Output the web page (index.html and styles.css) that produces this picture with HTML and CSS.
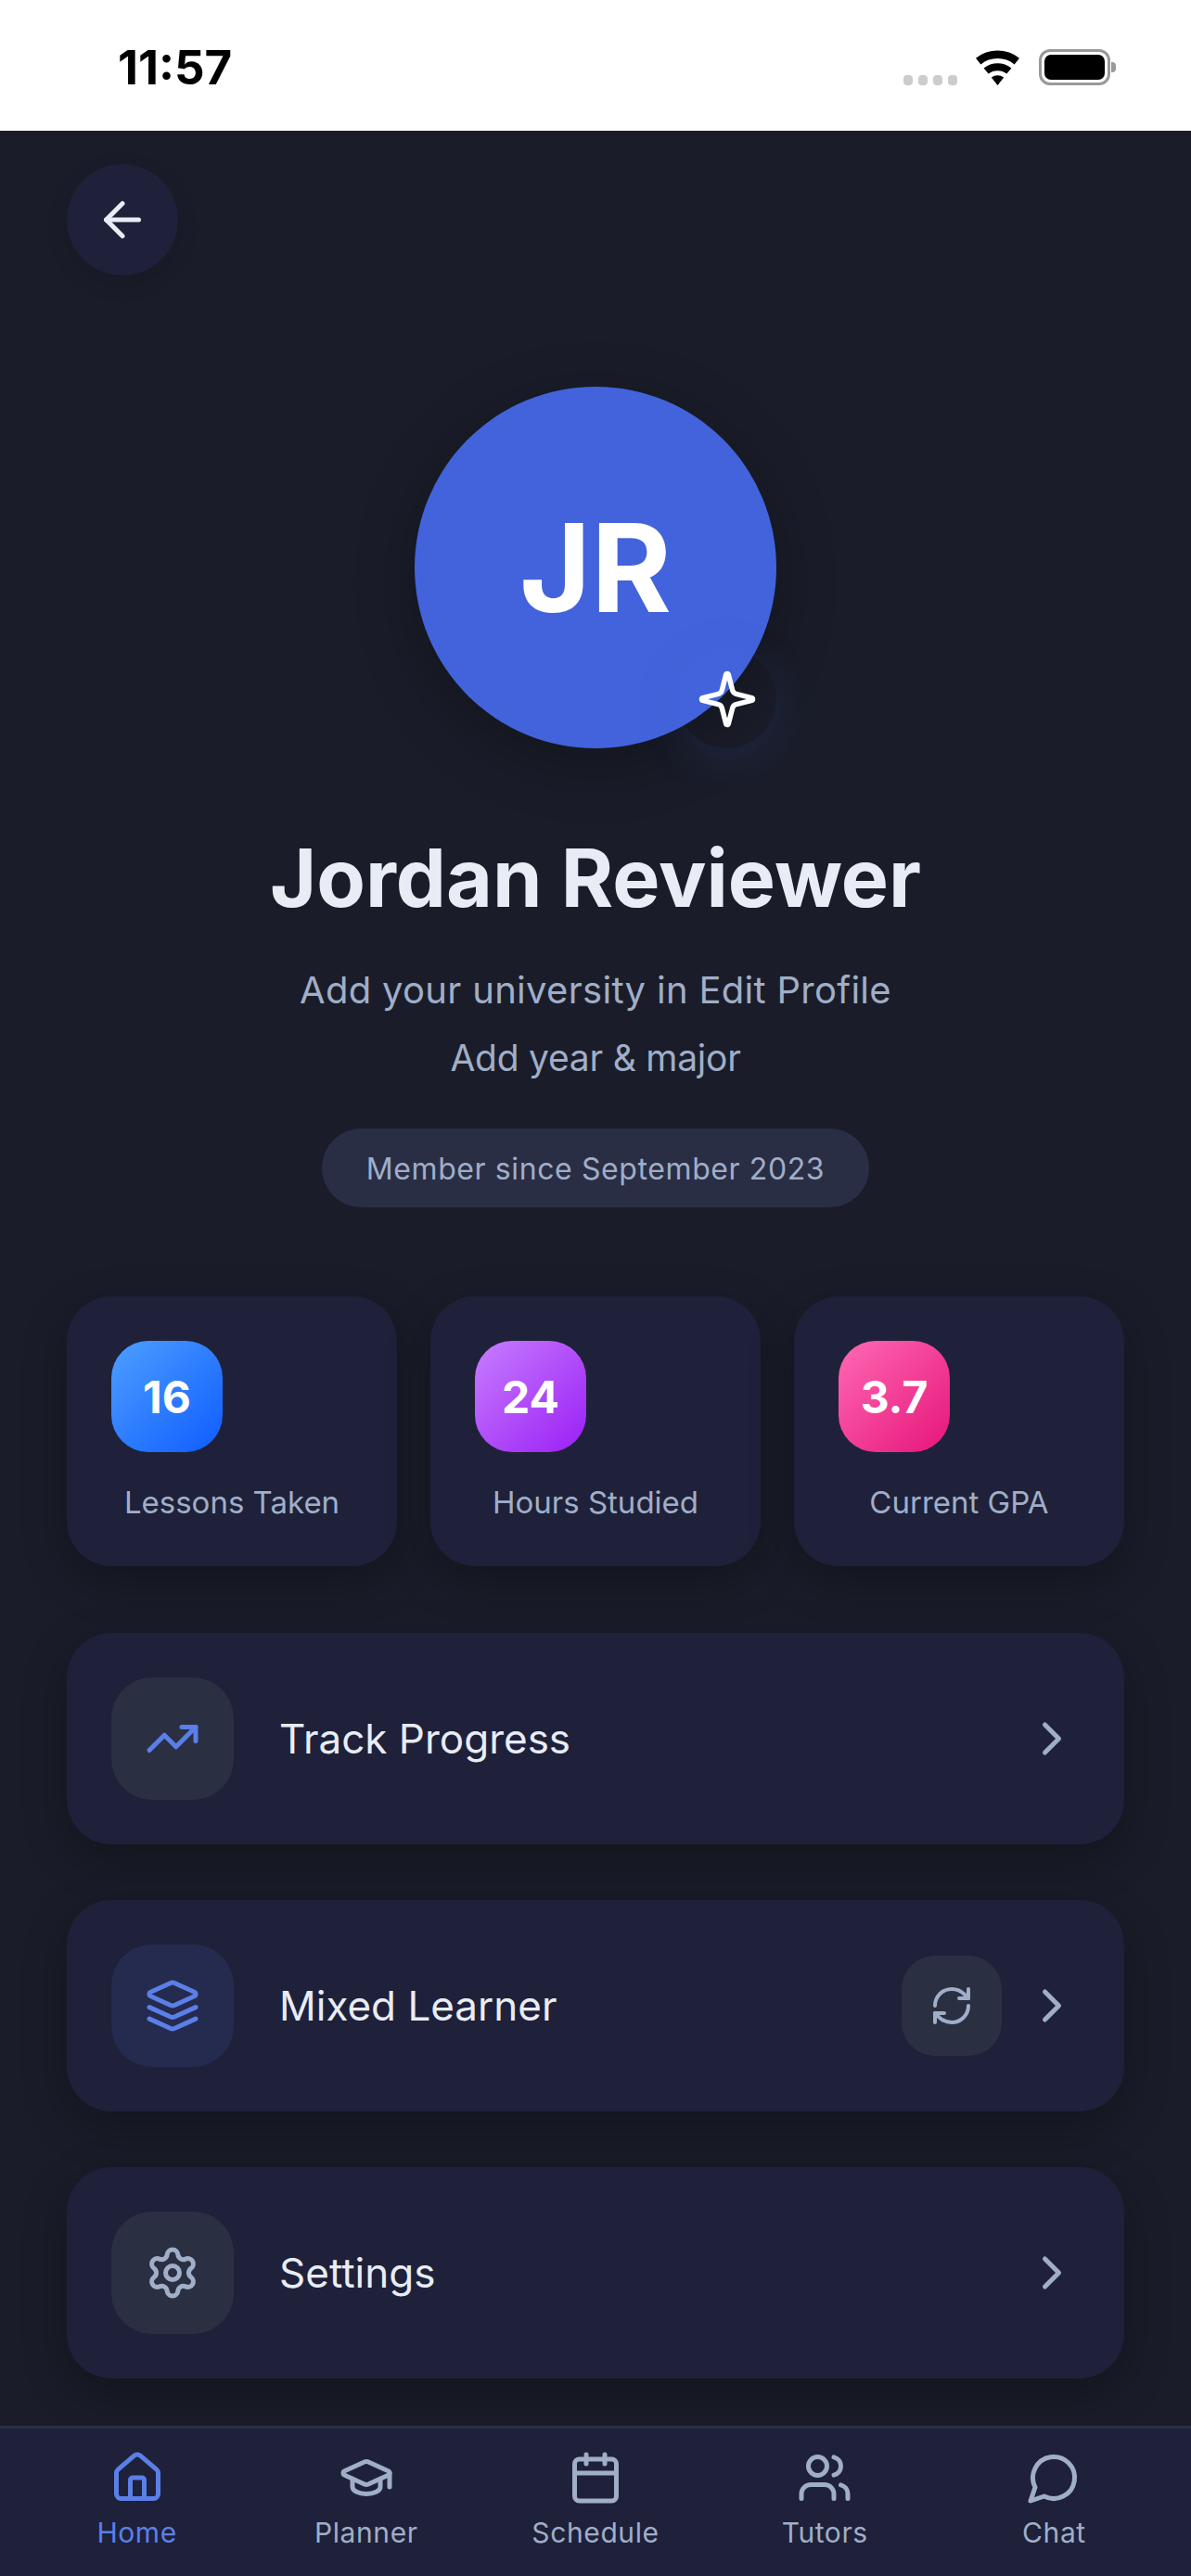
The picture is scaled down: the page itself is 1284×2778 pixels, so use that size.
FILE: index.html
```html
<!DOCTYPE html>
<html lang="en">
<head>
  <meta charset="UTF-8">
  <meta name="viewport" content="width=device-width, initial-scale=1.0">
  <title>Profile</title>
  <link rel="stylesheet" href="styles.css">
</head>
<body>
  <div class="app">
    <!-- Status bar -->
    <div class="status-bar">
      <span class="time">11:57</span>
      <div class="status-icons">
        <div class="signal"><i></i><i></i><i></i><i></i></div>
        <svg class="wifi" viewBox="0 0 51 38"><path d="M25.5 38 L18.8 29.6 A11 11 0 0 1 32.2 29.6 Z"/><path d="M15.6 25.6 L10.6 19.4 A24 24 0 0 1 40.4 19.4 L35.4 25.6 A16 16 0 0 0 15.6 25.6 Z"/><path d="M7.4 15.4 L2 8.8 A37 37 0 0 1 49 8.8 L43.6 15.4 A29 29 0 0 0 7.4 15.4 Z"/></svg>
        <div class="battery"><div class="battery-fill"></div></div>
      </div>
    </div>

    <main class="content">
      <button class="back-btn">
        <svg class="icon-60 light" viewBox="0 0 24 24"><path d="m12 19-7-7 7-7"/><path d="M19 12H5"/></svg>
      </button>

      <!-- Profile header -->
      <section class="profile">
        <div class="avatar-wrap">
          <div class="avatar-badge"></div>
          <div class="avatar">JR</div>
          <div class="badge-icon">
            <svg class="sparkle" viewBox="0 0 24 24"><path d="M9.937 15.5A2 2 0 0 0 8.5 14.063l-6.135-1.582a.5.5 0 0 1 0-.962L8.5 9.936A2 2 0 0 0 9.937 8.5l1.582-6.135a.5.5 0 0 1 .963 0L14.063 8.5A2 2 0 0 0 15.5 9.937l6.135 1.581a.5.5 0 0 1 0 .964L15.5 14.063a2 2 0 0 0-1.437 1.437l-1.582 6.135a.5.5 0 0 1-.963 0z"/></svg>
          </div>
        </div>
        <h1 class="name">Jordan Reviewer</h1>
        <p class="sub university">Add your university in Edit Profile</p>
        <p class="sub major">Add year &amp; major</p>
        <div class="member-chip">Member since September 2023</div>
      </section>

      <!-- Stats -->
      <section class="stats">
        <div class="stat-card">
          <div class="stat-num blue">16</div>
          <div class="stat-label">Lessons Taken</div>
        </div>
        <div class="stat-card">
          <div class="stat-num purple">24</div>
          <div class="stat-label">Hours Studied</div>
        </div>
        <div class="stat-card">
          <div class="stat-num pink">3.7</div>
          <div class="stat-label">Current GPA</div>
        </div>
      </section>

      <!-- Menu rows -->
      <section class="menu">
        <div class="menu-row">
          <div class="menu-icon">
            <svg class="icon-60 accent" viewBox="0 0 24 24"><polyline points="22 7 13.5 15.5 8.5 10.5 2 17"/><polyline points="16 7 22 7 22 13"/></svg>
          </div>
          <span class="menu-text">Track Progress</span>
          <svg class="icon-60 muted" viewBox="0 0 24 24"><path d="m9 18 6-6-6-6"/></svg>
        </div>
        <div class="menu-row">
          <div class="menu-icon tinted">
            <svg class="icon-60 accent" viewBox="0 0 24 24"><path d="m12.83 2.18a2 2 0 0 0-1.66 0L2.6 6.08a1 1 0 0 0 0 1.83l8.58 3.91a2 2 0 0 0 1.66 0l8.58-3.9a1 1 0 0 0 0-1.83Z"/><path d="m22 17.65-9.17 4.16a2 2 0 0 1-1.66 0L2 17.65"/><path d="m22 12.65-9.17 4.16a2 2 0 0 1-1.66 0L2 12.65"/></svg>
          </div>
          <span class="menu-text">Mixed Learner</span>
          <div class="switch-btn">
            <svg class="icon-48 muted" viewBox="0 0 24 24"><path d="M3 12a9 9 0 0 1 9-9 9.75 9.75 0 0 1 6.74 2.74L21 8"/><path d="M21 3v5h-5"/><path d="M21 12a9 9 0 0 1-9 9 9.75 9.75 0 0 1-6.74-2.74L3 16"/><path d="M8 16H3v5"/></svg>
          </div>
          <svg class="icon-60 muted" viewBox="0 0 24 24"><path d="m9 18 6-6-6-6"/></svg>
        </div>
        <div class="menu-row">
          <div class="menu-icon">
            <svg class="icon-60 muted" viewBox="0 0 24 24"><path d="M9.671 4.136a2.34 2.34 0 0 1 4.659 0 2.34 2.34 0 0 0 3.319 1.915 2.34 2.34 0 0 1 2.33 4.033 2.34 2.34 0 0 0 0 3.831 2.34 2.34 0 0 1-2.33 4.033 2.34 2.34 0 0 0-3.319 1.915 2.34 2.34 0 0 1-4.659 0 2.34 2.34 0 0 0-3.32-1.915 2.34 2.34 0 0 1-2.33-4.033 2.34 2.34 0 0 0 0-3.831A2.34 2.34 0 0 1 6.35 6.051a2.34 2.34 0 0 0 3.319-1.915"/><circle cx="12" cy="12" r="3"/></svg>
          </div>
          <span class="menu-text">Settings</span>
          <svg class="icon-60 muted" viewBox="0 0 24 24"><path d="m9 18 6-6-6-6"/></svg>
        </div>
      </section>
    </main>

    <!-- Bottom navigation -->
    <nav class="tab-bar">
      <div class="tab active">
        <svg class="icon-60 accent" viewBox="0 0 24 24"><path d="M15 21v-8a1 1 0 0 0-1-1h-4a1 1 0 0 0-1 1v8"/><path d="M3 10a2 2 0 0 1 .709-1.528l7-5.999a2 2 0 0 1 2.582 0l7 5.999A2 2 0 0 1 21 10v9a2 2 0 0 1-2 2H5a2 2 0 0 1-2-2z"/></svg>
        <span>Home</span>
      </div>
      <div class="tab">
        <svg class="icon-60 muted" viewBox="0 0 24 24"><path d="M21.42 10.922a1 1 0 0 0-.019-1.838L12.83 5.18a2 2 0 0 0-1.66 0L2.6 9.08a1 1 0 0 0 0 1.832l8.57 3.908a2 2 0 0 0 1.66 0z"/><path d="M22 10v6"/><path d="M6 12.5V16a6 3 0 0 0 12 0v-3.5"/></svg>
        <span>Planner</span>
      </div>
      <div class="tab">
        <svg class="icon-60 muted" viewBox="0 0 24 24"><path d="M8 2v4"/><path d="M16 2v4"/><rect x="3" y="4" width="18" height="18" rx="2"/><path d="M3 10h18"/></svg>
        <span>Schedule</span>
      </div>
      <div class="tab">
        <svg class="icon-60 muted" viewBox="0 0 24 24"><path d="M16 21v-2a4 4 0 0 0-4-4H6a4 4 0 0 0-4 4v2"/><circle cx="9" cy="7" r="4"/><path d="M22 21v-2a4 4 0 0 0-3-3.87"/><path d="M16 3.13a4 4 0 0 1 0 7.75"/></svg>
        <span>Tutors</span>
      </div>
      <div class="tab">
        <svg class="icon-60 muted" viewBox="0 0 24 24"><path d="M7.9 20A9 9 0 1 0 4 16.1L2 22Z"/></svg>
        <span>Chat</span>
      </div>
    </nav>
  </div>
</body>
</html>
```

FILE: styles.css
```css
/* General styling */
* {
  box-sizing: border-box;
}
body {
  margin: 0;
  font-family: Inter, "Liberation Sans", sans-serif;
  background-color: #1a1d29;
  color: #e8ecf4;
}
p, h1 {
  margin: 0;
}
svg {
  fill: none;
  stroke: currentColor;
  stroke-width: 2;
  stroke-linecap: round;
  stroke-linejoin: round;
  flex-shrink: 0;
}
.icon-60 {
  width: 60px;
  height: 60px;
}
.icon-48 {
  width: 48px;
  height: 48px;
}
.light {
  color: #e8ecf4;
}
.accent {
  color: #5b7fe8;
}
.muted {
  color: #a0aec8;
}
.app {
  width: 1284px;
  height: 2778px;
  display: flex;
  flex-direction: column;
  overflow: hidden;
}

/* Status bar */
.status-bar {
  height: 141px;
  background-color: #fff;
  display: flex;
  justify-content: space-between;
  padding: 44px 87px 0 127px;
  color: #000;
}
.time {
  font-size: 51px;
  font-weight: 700;
  line-height: 58px;
}
.status-icons {
  display: flex;
  align-items: flex-start;
  padding-top: 9px;
}
.signal {
  display: flex;
  gap: 6px;
  margin-top: 28px;
  margin-right: 18px;
}
.signal i {
  width: 10px;
  height: 11px;
  border-radius: 4px;
  background-color: #ccc;
}
.wifi {
  width: 51px;
  height: 38px;
  fill: #000;
  stroke: none;
  margin-top: 1px;
  margin-right: 19px;
}
.battery {
  width: 77px;
  height: 39px;
  border: 3px solid #999;
  border-radius: 12px;
  padding: 3px;
  position: relative;
}
.battery::after {
  content: "";
  position: absolute;
  right: -9px;
  top: 11px;
  width: 5px;
  height: 11px;
  border-radius: 0 4px 4px 0;
  background-color: #999;
}
.battery-fill {
  height: 100%;
  background-color: #000;
  border-radius: 7px;
}

/* Main content */
.content {
  flex: 1;
  padding: 36px 72px 0;
}
.back-btn {
  width: 120px;
  height: 120px;
  border: none;
  padding: 0;
  border-radius: 50%;
  background-color: #1e2139;
  box-shadow: 0 8px 24px rgba(0, 0, 0, 0.12);
  display: flex;
  align-items: center;
  justify-content: center;
}

/* Profile header */
.profile {
  display: flex;
  flex-direction: column;
  align-items: center;
  margin-top: 120px;
}
.avatar-wrap {
  position: relative;
  width: 390px;
  height: 390px;
}
.avatar {
  position: relative;
  width: 390px;
  height: 390px;
  border-radius: 50%;
  background-color: #4263db;
  color: #fff;
  font-size: 132px;
  font-weight: 700;
  display: flex;
  align-items: center;
  justify-content: center;
  box-shadow: 0 16px 64px rgba(0, 0, 0, 0.3);
}
.avatar-badge {
  position: absolute;
  left: 283px;
  top: 283px;
  width: 107px;
  height: 107px;
  border-radius: 50%;
  background-color: #1a1d29;
}
.badge-icon {
  position: absolute;
  left: 283px;
  top: 283px;
  width: 107px;
  height: 107px;
  border-radius: 50%;
  display: flex;
  align-items: center;
  justify-content: center;
  box-shadow: 0 8px 48px rgba(66, 99, 219, 0.16);
}
.sparkle {
  width: 66px;
  height: 66px;
  color: #fff;
}
.name {
  margin-top: 90px;
  font-size: 86px;
  line-height: 100px;
  font-weight: 700;
}
.sub {
  font-size: 40px;
  line-height: 50px;
  color: #a0aec8;
}
.sub.university {
  margin-top: 46px;
  letter-spacing: 0.3px;
}
.sub.major {
  margin-top: 23px;
  font-size: 39px;
  letter-spacing: -0.25px;
}
.member-chip {
  margin-top: 51px;
  height: 85px;
  padding: 2px 48px 0;
  border-radius: 43px;
  background-color: #2a2e45;
  color: #a0aec8;
  font-size: 32px;
  letter-spacing: 0.6px;
  display: flex;
  align-items: center;
}

/* Stats */
.stats {
  display: grid;
  grid-template-columns: repeat(3, 1fr);
  gap: 36px;
  margin-top: 96px;
}
.stat-card {
  height: 291px;
  padding: 48px;
  border-radius: 48px;
  background-color: #1e2139;
  box-shadow: 0 16px 48px rgba(0, 0, 0, 0.3);
}
.stat-num {
  width: 120px;
  height: 120px;
  border-radius: 40px;
  color: #fff;
  font-size: 48px;
  font-weight: 700;
  display: flex;
  align-items: center;
  justify-content: center;
}
.blue {
  background: linear-gradient(135deg, #4d9fff, #0f5cff);
}
.purple {
  background: linear-gradient(135deg, #c77dff, #9b1ff5);
}
.pink {
  background: linear-gradient(135deg, #ff69b4, #e6157a);
}
.stat-label {
  margin: 34px -20px 0;
  text-align: center;
  font-size: 33px;
  line-height: 40px;
  color: #a0aec8;
}

/* Menu rows */
.menu {
  display: flex;
  flex-direction: column;
  gap: 60px;
  margin-top: 72px;
}
.menu-row {
  height: 228px;
  padding: 0 48px;
  border-radius: 48px;
  background-color: #1e2139;
  box-shadow: 0 16px 48px rgba(0, 0, 0, 0.3);
  display: flex;
  align-items: center;
}
.menu-icon {
  width: 132px;
  height: 132px;
  border-radius: 44px;
  background-color: #2a2f42;
  display: flex;
  align-items: center;
  justify-content: center;
}
.menu-icon.tinted {
  background-color: #252b4e;
}
.menu-text {
  flex: 1;
  margin-left: 49px;
  font-size: 44px;
  color: #e8ecf4;
}
.switch-btn {
  width: 108px;
  height: 108px;
  border-radius: 36px;
  background-color: #2a2f42;
  display: flex;
  align-items: center;
  justify-content: center;
  margin-right: 24px;
}

/* Bottom navigation */
.tab-bar {
  height: 162px;
  padding: 0 24px;
  border-top: 3px solid #2a2f42;
  background-color: #1e2139;
  display: flex;
}
.tab {
  flex: 1;
  display: flex;
  flex-direction: column;
  align-items: center;
  padding-top: 23px;
  font-size: 30px;
  line-height: 36px;
  letter-spacing: 0.6px;
  color: #a0aec8;
}
.tab span {
  margin-top: 11px;
}
.tab.active {
  color: #5b7fe8;
}
```
